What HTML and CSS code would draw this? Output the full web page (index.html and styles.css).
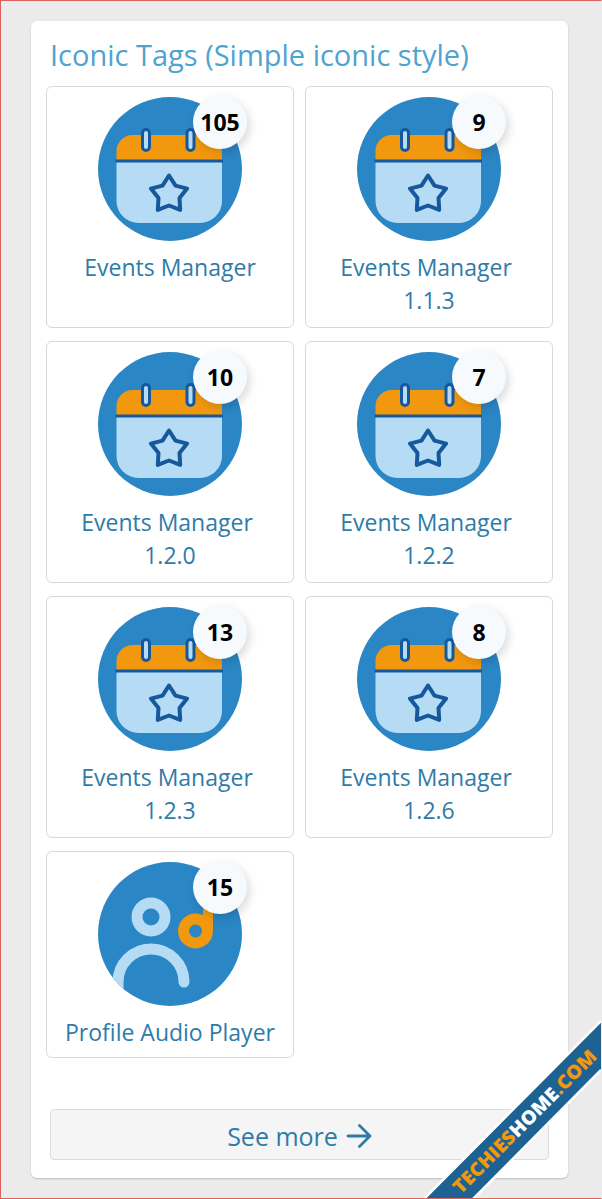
FILE: index.html
```html
<!DOCTYPE html>
<html lang="en">
<head>
    <meta charset="UTF-8">
    <meta name="viewport" content="width=device-width, initial-scale=1.0">
    <title>Iconic Tags</title>
    <link rel="stylesheet" href="styles.css">
</head>
<body>
    <svg class="defs" width="0" height="0" aria-hidden="true">
        <symbol id="calendar" viewBox="0 0 144 144">
            <circle cx="72" cy="72" r="72" fill="#2b86c5"/>
            <path d="M18.500 64V54A16 16 0 0 1 34.500 38H108A16 16 0 0 1 124 54V64Z" fill="#f2980f"/>
            <path d="M18.500 64H124V104A22 22 0 0 1 102 126H40.500A22 22 0 0 1 18.500 104Z" fill="#b5dbf5"/>
            <path d="M17.500 64H125" stroke="#16589c" stroke-width="3"/>
            <rect x="44.500" y="32.500" width="7" height="21" rx="3.500" fill="#b5dbf5" stroke="#16589c" stroke-width="3"/>
            <rect x="89" y="32.500" width="7" height="21" rx="3.500" fill="#b5dbf5" stroke="#16589c" stroke-width="3"/>
            <path d="M71 78.500L77.500 88.600L89.100 91.600L81.500 100.900L82.200 112.900L71 108.500L59.800 112.900L60.500 100.900L52.900 91.600L64.500 88.600Z" fill="none" stroke="#16589c" stroke-width="4" stroke-linejoin="round"/>
        </symbol>
        <clipPath id="disc"><circle cx="72" cy="72" r="72"/></clipPath>
        <symbol id="profile" viewBox="0 0 144 144">
            <circle cx="72" cy="72" r="72" fill="#2b86c5"/>
            <g clip-path="url(#disc)" fill="none" stroke="#b5dbf5" stroke-width="11" stroke-linecap="round">
                <circle cx="53" cy="55" r="14"/>
                <path d="M20 136V120A33 33 0 0 1 86 120"/>
            </g>
            <circle cx="97.500" cy="69" r="12" fill="none" stroke="#f2980f" stroke-width="11"/>
            <path d="M105 69V42H115V69Z" fill="#f2980f"/>
        </symbol>
    </svg>

    <main class="card">
        <h2 class="card-title">Iconic Tags (Simple iconic style)</h2>
        <div class="tag-grid">
            <a class="tag" href="#">
                <span class="tag-icon">
                    <svg width="144" height="144"><use href="#calendar"/></svg>
                    <span class="badge">105</span>
                </span>
                <span class="tag-name">Events Manager</span>
            </a>
            <a class="tag" href="#">
                <span class="tag-icon">
                    <svg width="144" height="144"><use href="#calendar"/></svg>
                    <span class="badge">9</span>
                </span>
                <span class="tag-name">Events Manager&nbsp;<br>1.1.3</span>
            </a>
            <a class="tag" href="#">
                <span class="tag-icon">
                    <svg width="144" height="144"><use href="#calendar"/></svg>
                    <span class="badge">10</span>
                </span>
                <span class="tag-name">Events Manager&nbsp;<br>1.2.0</span>
            </a>
            <a class="tag" href="#">
                <span class="tag-icon">
                    <svg width="144" height="144"><use href="#calendar"/></svg>
                    <span class="badge">7</span>
                </span>
                <span class="tag-name">Events Manager&nbsp;<br>1.2.2</span>
            </a>
            <a class="tag" href="#">
                <span class="tag-icon">
                    <svg width="144" height="144"><use href="#calendar"/></svg>
                    <span class="badge">13</span>
                </span>
                <span class="tag-name">Events Manager&nbsp;<br>1.2.3</span>
            </a>
            <a class="tag" href="#">
                <span class="tag-icon">
                    <svg width="144" height="144"><use href="#calendar"/></svg>
                    <span class="badge">8</span>
                </span>
                <span class="tag-name">Events Manager&nbsp;<br>1.2.6</span>
            </a>
            <a class="tag tag-single" href="#">
                <span class="tag-icon">
                    <svg width="144" height="144"><use href="#profile"/></svg>
                    <span class="badge">15</span>
                </span>
                <span class="tag-name">Profile Audio Player</span>
            </a>
        </div>
        <a class="see-more" href="#">
            See more
            <svg width="26" height="24" viewBox="0 0 26 24"><path d="M2 12H23M13.500 1.500L24 12L13.500 22.500" fill="none" stroke="currentColor" stroke-width="2.800" stroke-linecap="round" stroke-linejoin="round"/></svg>
        </a>
    </main>

    <svg class="ribbon" width="178" height="178" viewBox="0 0 178 178">
        <path d="M177 0V49L49 178H0Z" fill="#1d6293"/>
        <path d="M177 0L0 178M177 49L49 178" stroke="#fff" stroke-width="2.500"/>
        <text class="ribbon-text" transform="translate(36.850 173.850) rotate(-45)" textLength="194" lengthAdjust="spacingAndGlyphs">TECHIES<tspan class="ribbon-white">HOME</tspan>.COM</text>
    </svg>
</body>
</html>
```

FILE: styles.css
```css
html, body {
    margin: 0;
}
body {
    position: relative;
    box-sizing: border-box;
    width: 602px;
    height: 1199px;
    padding: 20px 33px 20px 30px;
    overflow: hidden;
    background-color: #ebebeb;
    border: 1px solid #d9635d;
    border-right-color: #ebebeb;
    font-family: "Open Sans", "Noto Sans", sans-serif;
}
a {
    text-decoration: none;
    color: #2f7ba8;
}
.defs {
    position: absolute;
}
.card {
    display: flex;
    flex-direction: column;
    box-sizing: border-box;
    height: 1157px;
    padding: 14px 15px 18px;
    background-color: white;
    border-radius: 6px;
    box-shadow: 0 1px 2px rgba(0, 0, 0, 0.2);
}
.card-title {
    margin: 0 4px 12px;
    color: #4fa3d1;
    font-size: 29px;
    font-weight: 400;
    line-height: 39px;
}
.tag-grid {
    display: grid;
    grid-template-columns: 248px 248px;
    column-gap: 11px;
    row-gap: 13px;
}
.tag {
    display: flex;
    flex-direction: column;
    align-items: center;
    padding: 10px 0;
    background-color: white;
    border: 1px solid #d8d8de;
    border-radius: 6px;
}
.tag-single {
    padding-bottom: 8px;
}
.tag-icon {
    position: relative;
    display: block;
    width: 144px;
    height: 144px;
}
.tag-icon svg {
    display: block;
}
.badge {
    position: absolute;
    top: -2px;
    left: 95px;
    width: 54px;
    height: 54px;
    border-radius: 50%;
    background-color: #f7fafc;
    box-shadow: 3px 4px 10px rgba(0, 0, 0, 0.14);
    color: black;
    font-size: 23px;
    font-weight: 700;
    line-height: 54px;
    text-align: center;
}
.tag-name {
    margin-top: 10px;
    font-size: 23px;
    line-height: 33px;
    text-align: center;
}
.see-more {
    display: flex;
    align-items: center;
    justify-content: center;
    gap: 8px;
    height: 47px;
    margin: auto 4px 0;
    padding-top: 2px;
    background-color: #f5f5f5;
    border: 1px solid #dcdcdc;
    border-radius: 4px;
    font-size: 25px;
}
.ribbon {
    position: absolute;
    right: -1px;
    bottom: -1px;
}
.ribbon-text {
    fill: #f2980f;
    font-family: "Open Sans", sans-serif;
    font-size: 19px;
    font-weight: 800;
}
.ribbon-white {
    fill: white;
}
```
